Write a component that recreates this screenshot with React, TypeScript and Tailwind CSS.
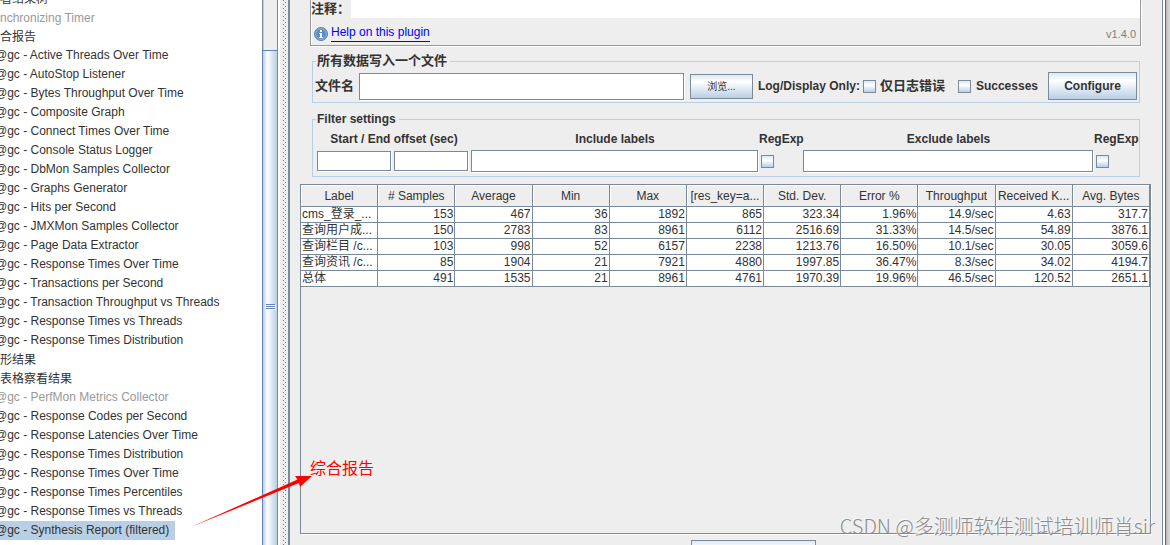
import clsx from 'clsx'
import React from 'react'

interface TreeItem {
  label: string
  disabled?: boolean
  selected?: boolean
  // local (non-plugin) nodes have no "@gc - " prefix
  plain?: boolean
}

const treeItems: TreeItem[] = [
  { label: '看结果树', plain: true },
  { label: 'nchronizing Timer', plain: true, disabled: true },
  { label: '合报告', plain: true },
  { label: 'Active Threads Over Time' },
  { label: 'AutoStop Listener' },
  { label: 'Bytes Throughput Over Time' },
  { label: 'Composite Graph' },
  { label: 'Connect Times Over Time' },
  { label: 'Console Status Logger' },
  { label: 'DbMon Samples Collector' },
  { label: 'Graphs Generator' },
  { label: 'Hits per Second' },
  { label: 'JMXMon Samples Collector' },
  { label: 'Page Data Extractor' },
  { label: 'Response Times Over Time' },
  { label: 'Transactions per Second' },
  { label: 'Transaction Throughput vs Threads' },
  { label: 'Response Times vs Threads' },
  { label: 'Response Times Distribution' },
  { label: '形结果', plain: true },
  { label: '表格察看结果', plain: true },
  { label: 'PerfMon Metrics Collector', disabled: true },
  { label: 'Response Codes per Second' },
  { label: 'Response Latencies Over Time' },
  { label: 'Response Times Distribution' },
  { label: 'Response Times Over Time' },
  { label: 'Response Times Percentiles' },
  { label: 'Response Times vs Threads' },
  { label: 'Synthesis Report (filtered)', selected: true }
]

const columns = [
  'Label',
  '# Samples',
  'Average',
  'Min',
  'Max',
  '[res_key=a...',
  'Std. Dev.',
  'Error %',
  'Throughput',
  'Received K...',
  'Avg. Bytes'
]

const rows = [
  ['cms_登录_...', '153', '467', '36', '1892', '865', '323.34', '1.96%', '14.9/sec', '4.63', '317.7'],
  ['查询用户成...', '150', '2783', '83', '8961', '6112', '2516.69', '31.33%', '14.5/sec', '54.89', '3876.1'],
  ['查询栏目 /c...', '103', '998', '52', '6157', '2238', '1213.76', '16.50%', '10.1/sec', '30.05', '3059.6'],
  ['查询资讯 /c...', '85', '1904', '21', '7921', '4880', '1997.85', '36.47%', '8.3/sec', '34.02', '4194.7'],
  ['总体', '491', '1535', '21', '8961', '4761', '1970.39', '19.96%', '46.5/sec', '120.52', '2651.1']
]

function Tree(): React.ReactElement {
  return (
    <nav className="w-[262px] shrink-0 overflow-hidden bg-white">
      <ul className="-mt-[11px]">
        {treeItems.map((item, i) => (
          <li key={i} className="flex h-[19px]">
            <a
              href="#"
              className={clsx(
                'whitespace-pre',
                item.disabled && 'text-[#999999]',
                item.selected && 'bg-[#b8cfe5] pr-1.5',
                item.plain ? 'leading-5' : '-ml-[5px] leading-[19px]'
              )}>
              {item.plain ? item.label : `@gc - ${item.label}`}
            </a>
          </li>
        ))}
      </ul>
    </nav>
  )
}

function ScrollBar(): React.ReactElement {
  return (
    <div className="flex w-4 shrink-0 flex-col border-r border-[#7a8a99] bg-[#eeeeee]">
      <div className="h-[50px] border-l border-[#7a8a99] shadow-[inset_1px_0_0_#b8cfe5]" />
      <div className="flex grow flex-col items-center border-t border-l border-[#6382bf] bg-linear-to-r from-[#b8cfe5] via-white via-30% to-[#b8cfe5] pt-[253px]">
        <div className="flex flex-col gap-px">
          <div className="h-px w-[9px] bg-[#6382bf] shadow-[1px_1px_0_#ffffff]" />
          <div className="h-px w-[9px] bg-[#6382bf] shadow-[1px_1px_0_#ffffff]" />
          <div className="h-px w-[9px] bg-[#6382bf] shadow-[1px_1px_0_#ffffff]" />
        </div>
      </div>
    </div>
  )
}

function Divider(): React.ReactElement {
  return (
    <div className="flex w-3 shrink-0 border-r-2 border-l-2 border-l-white border-r-[#7a8a99] bg-[#eeeeee] pl-[3px]">
      <div className="w-px bg-[repeating-linear-gradient(#777777_0_1px,#eeeeee_1px_4px)]" />
      <div className="ml-px w-px bg-[repeating-linear-gradient(#eeeeee_0_2px,#777777_2px_3px,#eeeeee_3px_4px)]" />
    </div>
  )
}

function TextField({ label, className }: { label: string; className?: string }): React.ReactElement {
  return (
    <input
      type="text"
      aria-label={label}
      className={clsx(
        'min-w-0 border border-[#7a8a99] bg-white px-1 shadow-[1px_1px_0_#ffffff] outline-none',
        className
      )}
    />
  )
}

function CheckBox({ id, label }: { id: string; label?: string }): React.ReactElement {
  return (
    <input
      id={id}
      type="checkbox"
      aria-label={label}
      className="size-[13px] shrink-0 appearance-none border border-[#7a8a99] bg-linear-to-b from-[#dde8f3] via-white via-40% to-[#b8cfe5] checked:bg-[#6382bf]"
    />
  )
}

function FilePanel(): React.ReactElement {
  return (
    <fieldset className="mt-[5px] mr-[22px] ml-[22px] border border-[#b8cfe5] font-bold">
      <legend className="ml-[3px] pr-[3px] pl-px text-[13px] leading-5">所有数据写入一个文件</legend>
      <div className="flex items-center pt-px pr-0.5 pb-0.5 pl-0.5">
        <label htmlFor="filename" className="shrink-0 text-[13px]">
          文件名
        </label>
        <input
          id="filename"
          type="text"
          className="ml-[5px] h-[27px] min-w-0 grow border border-[#7a8a99] bg-white px-1 shadow-[1px_1px_0_#ffffff] outline-none"
        />
        <button
          type="button"
          className="ml-1.5 h-[25px] w-[63px] shrink-0 border border-[#7a8a99] bg-linear-to-b from-[#dde8f3] via-white via-30% to-[#b8cfe5] text-[10px] font-normal">
          浏览...
        </button>
        <span className="ml-[5px] shrink-0">Log/Display Only:</span>
        <div className="ml-[3px] flex shrink-0 items-center gap-1">
          <CheckBox id="errors" />
          <label htmlFor="errors" className="text-[13px]">
            仅日志错误
          </label>
        </div>
        <div className="ml-[13px] flex shrink-0 items-center gap-[5px]">
          <CheckBox id="successes" />
          <label htmlFor="successes">Successes</label>
        </div>
        <button
          type="button"
          className="ml-2.5 h-7 w-[89px] shrink-0 border border-[#7a8a99] bg-linear-to-b from-[#dde8f3] via-white via-30% to-[#b8cfe5]">
          Configure
        </button>
      </div>
    </fieldset>
  )
}

function FilterPanel(): React.ReactElement {
  return (
    <fieldset className="mt-2 mr-[22px] ml-[22px] border border-[#b8cfe5] font-bold">
      <legend className="ml-[3px] pr-[3px] pl-px leading-4">Filter settings</legend>
      <div className="grid grid-cols-[154px_288fr_44px_291fr_44px] pt-1 pr-px pb-1 pl-1 text-center">
        <span className="leading-4">Start / End offset (sec)</span>
        <span className="leading-4">Include labels</span>
        <span className="text-left leading-4">RegExp</span>
        <span className="leading-4">Exclude labels</span>
        <span className="text-left leading-4">RegExp</span>
        <div className="mt-[3px] flex items-center gap-[3px]">
          <TextField label="Start offset" className="h-5 w-[74px]" />
          <TextField label="End offset" className="h-5 w-[74px]" />
        </div>
        <TextField label="Include labels" className="mt-[3px] mr-px h-[22px]" />
        <div className="mt-[3px] flex items-center pl-0.5">
          <CheckBox id="include-regexp" label="Include RegExp" />
        </div>
        <TextField label="Exclude labels" className="mt-[3px] mr-px h-[22px]" />
        <div className="mt-[3px] flex items-center pl-0.5">
          <CheckBox id="exclude-regexp" label="Exclude RegExp" />
        </div>
      </div>
    </fieldset>
  )
}

function ReportTable(): React.ReactElement {
  return (
    <div className="mt-[7px] mr-[11px] ml-2.5 grow border border-[#7a8a99] shadow-[1px_1px_0_#ffffff]">
      <table className="w-full table-fixed border-separate border-spacing-0">
        <thead>
          <tr>
            {columns.map((column) => (
              <th
                key={column}
                className="h-[22px] overflow-hidden border-r border-b border-[#7a8a99] p-0 font-normal whitespace-nowrap shadow-[inset_1px_1px_0_#ffffff]">
                {column}
              </th>
            ))}
          </tr>
        </thead>
        <tbody>
          {rows.map((row) => (
            <tr key={row[0]}>
              {row.map((cell, i) => (
                <td
                  key={i}
                  className={clsx(
                    'h-4 overflow-hidden border-r border-b border-[#7a8a99] bg-white px-px py-0 leading-[15px] whitespace-nowrap',
                    i > 0 && 'text-right'
                  )}>
                  {cell}
                </td>
              ))}
            </tr>
          ))}
        </tbody>
      </table>
    </div>
  )
}

export default function App(): React.ReactElement {
  return (
    <div className="relative flex h-screen overflow-hidden bg-[#eeeeee] font-['Liberation_Sans','Noto_Sans_CJK_SC',sans-serif] text-[12px] text-[#333333]">
      <Tree />
      <ScrollBar />
      <Divider />
      <main className="flex min-w-0 grow flex-col border-r border-[#7a8a99]">
        <div className="mr-[21px] ml-5 h-[46px] shrink-0 border-x border-b border-[#999999] shadow-[1px_1px_0_#ffffff,inset_1px_0_0_#ffffff]">
          <div className="flex h-[18px] items-center">
            <label htmlFor="comment" className="w-10 shrink-0 text-[13px] leading-5 font-bold">
              注释：
            </label>
            <input id="comment" type="text" className="h-full min-w-0 grow bg-white outline-none" />
          </div>
          <div className="flex items-center justify-between pt-1 pr-1 pl-[3px]">
            <div className="flex items-center gap-[3px]">
              <svg viewBox="0 0 14 14" className="mt-1 size-3.5">
                <circle cx="7" cy="7" r="6.5" fill="#5b8fc4" stroke="#5f7f9f" />
                <circle cx="7" cy="7" r="5.4" fill="none" stroke="#9dbfdf" strokeWidth="0.8" />
                <path d="M6 3h2v2H6zM5.3 6H8v4h.8v1H5.3v-1H6V7h-.7z" fill="#ffffff" />
              </svg>
              <a href="#" className="border-b border-[#0000ff] leading-[18px] text-[#0000ff]">
                Help on this plugin
              </a>
            </div>
            <span className="pt-1 text-[11px] text-[#808080]">v1.4.0</span>
          </div>
        </div>
        <FilePanel />
        <FilterPanel />
        <ReportTable />
        <div className="flex h-[11px] shrink-0 justify-center overflow-hidden pt-1.5 pr-[26px] pl-20">
          <button
            type="button"
            aria-label="Save"
            className="h-[25px] w-[125px] shrink-0 border border-[#7a8a99] bg-linear-to-b from-[#dde8f3] via-white via-30% to-[#b8cfe5]"
          />
        </div>
      </main>
      <div className="w-[7px] shrink-0 border-l-2 border-white">
        <div className="h-full border-l border-[#666666] bg-linear-to-r from-[#b8b8b8] to-[#dddddd]" />
      </div>

      <svg viewBox="0 0 130 60" className="absolute top-[470px] left-[188px] h-[60px] w-[130px]">
        <path d="M3 57 109.5 9.5 107 6 124 6 112 17 111 13Z" fill="#ff0000" />
      </svg>
      <span className="absolute top-[457px] left-[310px] text-[16px] leading-6 text-[#ff0000]">
        综合报告
      </span>
      <span className="absolute right-[15px] bottom-1.5 font-['Noto_Sans_CJK_SC',sans-serif] text-[20px] leading-[26px] font-light whitespace-nowrap text-[#8c8c8c] [text-shadow:-1px_-1px_0_#f8f8f8]">
        CSDN @多测师软件测试培训师肖sir
      </span>
    </div>
  )
}
